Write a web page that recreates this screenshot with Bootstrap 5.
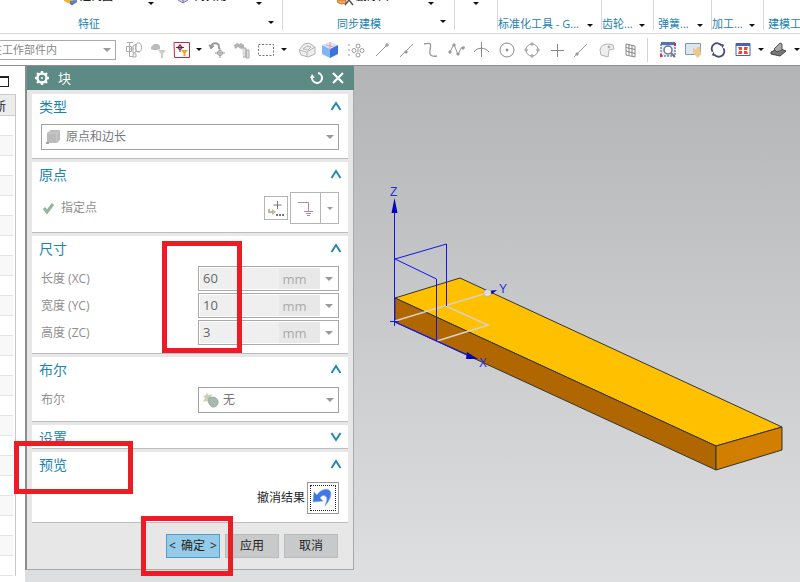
<!DOCTYPE html>
<html lang="zh-CN">
<head>
<meta charset="utf-8">
<meta name="viewport" content="width=device-width, initial-scale=1">
<title>块</title>
<link href="https://cdn.jsdelivr.net/npm/bootstrap@5.3.0/dist/css/bootstrap.min.css" rel="stylesheet">
<style>
body{font-family:"Open Sans","Noto Sans CJK SC",sans-serif;font-size:12px;line-height:16px;color:#222;background:#fff}
button{font:inherit}
.plain{border:0;background:none;padding:0;color:inherit}
.tri{width:0;height:0;border:3px solid transparent;border-top-color:#111;border-bottom:0;flex:none;display:block}
.tri-lg{border-width:4px 4px 0;border-top-color:#999}
.tri-dim{border-top-color:#999}
/* ribbon */
.ribbon{height:34px;border-bottom:1px solid #d8d8d8;font-size:11px;overflow:hidden}
.rgroup{flex:none;border-right:1px solid #d8d8d8;height:30px}
.rtop{height:12px;overflow:hidden}
.rtop button{height:12px;line-height:12px;display:flex;align-items:flex-end}
.rtop svg{flex:none}
.rtop .cap{display:block;height:16px;line-height:16px;margin-bottom:8px;font-weight:500;width:38px;text-align:left;white-space:nowrap}
.rtop .tri{margin-bottom:7px}
.rlabel{height:20px;color:#1d7fae;white-space:nowrap;padding-top:4px}
.g1{width:283px}.g2{width:172px}.g3{width:43px}.g4{width:104px}.g5{width:52px}.g6{width:58px}.g7{width:52px}
.in1{padding-left:64px}.in2{padding-left:54px}
.gap-24{width:24px}.gap-30{width:30px}.gap-34{width:34px}
/* selection bar */
.tools{height:32px;border-bottom:1px solid #8f8f8f;overflow:hidden}
.scope{width:126px;height:20px;margin:0 6px 0 -10px;flex:none}
.scope select{font-size:11px;color:#888;border:1px solid #a9a9a9;padding:0}
.pick{appearance:none;border-radius:0;background:#fff;outline:0;width:100%;height:100%;line-height:16px}
.over-tri{position:absolute;right:5px;top:50%;margin-top:-2px;pointer-events:none}
.t24{width:24px}.t25{width:25px}.t26{width:26px}.t12{width:12px}.t10{width:10px}
.tools button{flex:none;height:28px;display:flex;align-items:center;justify-content:center}
.vsep{width:1px;height:24px;background:#d4d4d4;flex:none;margin:0 7px 0 4px}
/* part navigator edge */
.nav-edge{width:25px;overflow:hidden;flex:none}
.winbox{width:16px;height:11px;border:2px solid #222;border-width:2px 1px 1px;margin:10px 0 7px -7px}
.tree{width:16px;border-right:1px solid #c8c8c8}
.tree .th0{height:22px;background:#ececec;border:solid #ccc;border-width:1px 0;overflow:hidden;direction:rtl;padding-right:9px;line-height:23px;white-space:nowrap}
.tree .tr0{height:20px;border-bottom:1px solid #e4e4e4;margin-right:2px}
.tree .tr0:nth-child(odd){background:#f8f8f8}
/* dialog */
.dlg{width:329px;flex:none;background:#e7e7e7;border:1px solid #a9a9a9;border-top:0;border-left:2px solid #8c8c8c}
.dlg-head{height:24px;background:#5d8a84;color:#fff;font-size:13px;margin-right:-1px;padding:0 10px 0 7px}
.secs{gap:3px;padding:4px 5px 0}
.sec{background:#fff;border-bottom:1px solid #bdbdbd}
.sec-head{height:23px;color:#1d84b2;padding:3px 6px 0 7px}
.sec-head h2{font-size:14px;line-height:20px;font-weight:400;margin:0}
.sec-body{padding:7px 9px 8px;color:#8e8e8e}
.rows{gap:2px}
.combo{height:26px}
.combo select{border:1px solid #a3a3a3;color:#777;padding:0 0 0 24px}
.combo svg{position:absolute;left:4px;top:4px;pointer-events:none}
.fld{width:141px}
.num{height:25px;border:1px solid #a9a9a9;padding:1px;background:#fff}
.num input{border:0;background:#efefef;color:#666;font-size:13px;line-height:16px;padding:0 0 2px 3px;width:79px;min-width:0;outline:0;border-radius:0}
.num .unit{width:41px;background:#e8e8e8;color:#aaa;font-size:13px;line-height:23px;text-align:center;padding-right:10px}
.num button{flex:1}
.ptbtn{width:24px;height:24px;border:1px solid #b5b5b5;background:#fff}
.split{width:49px;height:32px;border:1px solid #b5b5b5;margin-left:2px}
.split .drop{width:18px;border-left:1px solid #b5b5b5}
.undo-label{margin-right:2px}
.undo{width:32px;height:32px;border:1px solid #999;background:#fff;padding:2px}
.undo span{border:1px dotted #222}
.foot{padding:11px 15px;gap:5px}
.foot button{width:54px;height:24px;border:1px solid #bbb;background:#c8c9cb;color:#222;padding:0;white-space:nowrap}
.foot .ok{background:#95cbe8;border-color:#4b9fc8;display:flex;align-items:center;justify-content:center;gap:5px}
/* graphics window */
.work{background:linear-gradient(#b3b4b6,#c9cacc 50%,#dddfe1);min-width:0}
.scene{min-width:0;height:516px}
.scene svg{width:100%;height:100%;display:block}
/* callouts */
.hl{position:absolute;border:5px solid #ed1c24;pointer-events:none}
.hl-size{left:162px;top:175px;width:80px;height:112px}
.hl-preview{left:14px;top:375px;width:119px;height:53px}
.hl-ok{left:141px;top:450px;width:92px;height:60px}
</style>
<script src="https://cdn.jsdelivr.net/npm/bootstrap@5.3.0/dist/js/bootstrap.bundle.min.js"></script>
</head>
<body class="d-flex flex-column min-vh-100 overflow-hidden">

<header class="ribbon d-flex">
  <div class="rgroup g1">
    <div class="rtop d-flex in1">
      <button class="plain"><svg width="16" height="12"><path d="M0 0h13v2l-5 3-8-4z" fill="#f0b040"/><path d="M6 1l7-1v2L8 5.500 6 4z" fill="#5c7fc4"/></svg><span class="cap">边倒圆</span></button>
      <span class="gap-30"></span>
      <button class="plain" aria-label="更多"><span class="tri"></span></button>
      <span class="gap-24"></span>
      <button class="plain"><svg width="16" height="12"><path d="M0 0l5 3 5-3" fill="#c8d4f4" stroke="#6f85d0"/><path d="M5 0v3" stroke="#e04040"/></svg><span class="cap">倒斜角</span></button>
      <span class="gap-24"></span>
      <button class="plain" aria-label="更多"><span class="tri"></span></button>
    </div>
    <div class="rlabel position-relative text-center pe-2"><span class="d-inline-block me-5 pe-5">特征</span><span class="tri position-absolute end-0 bottom-0 mb-2 me-2"></span></div>
  </div>
  <div class="rgroup g2">
    <div class="rtop d-flex in2">
      <button class="plain"><svg width="19" height="12"><path d="M0 0h9v3L4 4 0 2z" fill="#f2a35c" stroke="#c87830"/><path d="M8 5l4-5 4 5" fill="none" stroke="#555" stroke-width="1.500"/></svg><span class="cap">删除面</span></button>
      <span class="gap-34"></span>
      <button class="plain" aria-label="更多"><span class="tri"></span></button>
    </div>
    <div class="rlabel d-flex in2"><span>同步建模</span><span class="tri ms-auto mt-1 me-2"></span></div>
  </div>
  <div class="rgroup g3"><div class="rtop d-flex justify-content-center"><button class="plain" aria-label="更多"><span class="tri"></span></button></div></div>
  <div class="rgroup g4"><div class="rtop"></div><div class="rlabel d-flex justify-content-between pe-2"><span>标准化工具 - G...</span><span class="tri mt-2"></span></div></div>
  <div class="rgroup g5"><div class="rtop"></div><div class="rlabel d-flex justify-content-between pe-2"><span>齿轮...</span><span class="tri mt-2"></span></div></div>
  <div class="rgroup g6"><div class="rtop"></div><div class="rlabel d-flex justify-content-between ps-1 pe-2"><span>弹簧...</span><span class="tri mt-2"></span></div></div>
  <div class="rgroup g7"><div class="rtop"></div><div class="rlabel d-flex justify-content-between pe-2"><span>加工...</span><span class="tri mt-2"></span></div></div>
  <div class="rgroup border-0"><div class="rtop"></div><div class="rlabel ps-1">建模工具</div></div>
</header>

<div class="tools d-flex align-items-center" role="toolbar" aria-label="选择条">
  <div class="scope position-relative"><select class="pick" aria-label="选择范围"><option>在工作部件内</option></select><span class="tri tri-lg over-tri"></span></div>
  <button class="plain t24" aria-label="部件间链接"><svg width="18" height="18" fill="none" stroke="#aaa"><path d="M2 1.500h6M4.500 1v14.500h4M4.500 8h4M1.500 5.500h5v5h-5zM8 5l3-2v8l-3 1zM8 13h3v3H8z"/><ellipse cx="13.500" cy="6.500" rx="3" ry="4.500"/><path d="M11 10l4 1"/></svg></button>
  <button class="plain t24" aria-label="过滤"><svg width="18" height="18"><path d="M2 6l3-3h4l2 2v3l-3 1H4L2 8z" fill="#bbb"/><path d="M9 9h8l-3 4v4h-2v-4z" fill="#ccc"/></svg></button>
  <button class="plain t24" aria-label="选择过滤器"><svg width="18" height="18"><path d="M1 1.500h15.500v15H1.500z" fill="#fff" stroke="#c22743"/><g fill="none" stroke="#7a1d33"><circle cx="7" cy="6.500" r="2"/><path d="M3 6.500h8M7 3v8"/></g><path d="M8 9h7l-2.500 3v3h-2v-3z" fill="#f2a41c"/></svg></button>
  <button class="plain t10" aria-label="展开"><span class="tri"></span></button>
  <button class="plain t26" aria-label="重置"><svg width="18" height="18" fill="none" stroke="#999"><path d="M3 6c0-5 8-5 8 0v2" stroke-width="1.800"/><path d="M1 4l2 4 3-3z" fill="#999"/><circle cx="12" cy="12" r="2.500"/><path d="M7 12h10M12 7v10"/></svg></button>
  <button class="plain t24" aria-label="移动"><svg width="18" height="18"><path d="M1 4l3-2 2 1 2-1 3 2v3l-3 1-3-2-3 2z" fill="#b4b4b4"/><path d="M9 7h4v9h-3M13 9h3v8h-3z" fill="#ddd" stroke="#aaa"/></svg></button>
  <button class="plain t24" aria-label="矩形选择"><svg width="18" height="18"><path d="M1.500 3.500h15v11h-15z" fill="none" stroke="#777" stroke-dasharray="2 1.500"/></svg></button>
  <button class="plain t12 me-1" aria-label="展开"><span class="tri"></span></button>
  <button class="plain t25" aria-label="线框实体"><svg width="18" height="18" fill="#ececec" stroke="#b4b4b4"><path d="M1 9l5-6 5-1 6 4v7l-7 3-7-2zM1 9l8 2 8-5M9 11v5M5 8l4-3 4 1-3 3z"/></svg></button>
  <button class="plain t25 pe-1" aria-label="着色"><svg width="18" height="18"><path d="M1 4l8-3 8 3-8 4z" fill="#d4e6ff"/><path d="M1 4l8 4v9l-8-4z" fill="#7fb6f6"/><path d="M17 4L9 8v9l8-4z" fill="#3c72dc"/><path d="M9 1v8M5 4l8 2" stroke="#e99" fill="none"/></svg></button>
  <button class="plain t25" aria-label="捕捉点"><svg width="18" height="18" fill="none" stroke="#999"><circle cx="10" cy="5" r="2"/><circle cx="6" cy="9.500" r="2"/><circle cx="14" cy="9.500" r="2"/><circle cx="10" cy="14" r="2"/><path d="M1 3v2M1 8v2M1 13v2M10 8v3"/></svg></button>
  <button class="plain t25" aria-label="端点"><svg width="18" height="18" fill="none" stroke="#999"><path d="M3 15L14 4"/><path d="M13 3h2v2h-2z" fill="#999"/></svg></button>
  <button class="plain t25" aria-label="中点"><svg width="18" height="18" fill="none" stroke="#999"><path d="M2 16L15 3"/><path d="M7 10h2v2H7z" fill="#999"/></svg></button>
  <button class="plain t25" aria-label="控制点"><svg width="18" height="18" fill="none" stroke="#999" stroke-width="1.300"><path d="M1 3c8-2 7 1 6 6s1 7 7 6"/></svg></button>
  <button class="plain t25" aria-label="极点"><svg width="18" height="18" fill="none" stroke="#999"><path d="M2 11l4-8 4 11 3-7 4-1"/><path d="M1 10h2v2H1zM5 3h2v2H5zM9 12h2v2H9zM14 6h2v2h-2z" fill="#999"/></svg></button>
  <button class="plain t25" aria-label="交点"><svg width="18" height="18" fill="none" stroke="#888"><path d="M8.500 1v15M1 11c3-5 11-5 15 0"/></svg></button>
  <button class="plain t25" aria-label="圆心"><svg width="18" height="18" fill="none" stroke="#888"><circle cx="9" cy="9" r="7"/><circle cx="9" cy="9" r="1" fill="#888"/></svg></button>
  <button class="plain t25" aria-label="象限点"><svg width="18" height="18" fill="none" stroke="#999"><circle cx="9" cy="9" r="6"/><path d="M8 2h2v2H8zM8 14h2v2H8zM2 8h2v2H2zM14 8h2v2h-2z" fill="#fff"/></svg></button>
  <button class="plain t25" aria-label="现有点"><svg width="18" height="18" stroke="#888"><path d="M9.500 3v13M3 9.500h13"/></svg></button>
  <button class="plain t25" aria-label="点在曲线上"><svg width="18" height="18" fill="none" stroke="#999"><path d="M1 16L14 3"/><path d="M3 12h2v2H3z" fill="#999"/></svg></button>
  <button class="plain t25" aria-label="点在面上"><svg width="18" height="18" fill="#eee" stroke="#b4b4b4"><path d="M2 9c1-6 8-7 13-5l1 4-5 1-1 7-7-2z"/><circle cx="11" cy="6" r="1" fill="#888"/></svg></button>
  <button class="plain t24" aria-label="栅格点"><svg width="18" height="18" fill="none" stroke="#888"><path d="M4 3l9 2v11l-9-2zM7 3v11M10 4v11M4 6.500l9 2M4 10l9 2.500"/></svg></button>
  <span class="vsep"></span>
  <button class="plain t25" aria-label="适合窗口"><svg width="18" height="18"><path d="M2 2h14v13H2z" fill="#e6edf8" stroke="#3343b4" stroke-dasharray="2 1"/><path d="M2 1h14v3H2z" fill="#536fc0"/><circle cx="9" cy="9" r="4" fill="#fff" stroke="#777" stroke-width="1.500"/><path d="M12 12l4 4" stroke="#777" stroke-width="2"/><path d="M15 2h2v3h-2zM1 13h2v3H1z" fill="#d33"/></svg></button>
  <button class="plain t25" aria-label="平移"><svg width="18" height="18"><path d="M1.500 2.500h15v11h-15z" fill="#dbe7f0" stroke="#8098b0"/><path d="M9 6l3 3 1-3h3l1 7-3 4-5-5z" fill="#ecc88d"/></svg></button>
  <button class="plain t25" aria-label="旋转"><svg width="16" height="16" viewBox="0 0 18 18" fill="none" stroke="#424c83" stroke-width="2"><path d="M3 11A6 6 0 0 1 13 4M15 7A6 6 0 0 1 5 14"/><path d="M12 2l4 1-2 4zM6 16l-4-1 2-4z" fill="#424c83" stroke="none"/></svg></button>
  <button class="plain t25" aria-label="布局"><svg width="18" height="18"><path d="M2 2.500h14v12H2z" fill="#fff" stroke="#4862b0"/><path d="M2 2h14v3H2z" fill="#4862b0"/><path d="M4 6h4v3H5v-1zM14 6h-4v3h3zM4 13h4v-3H5zM14 13h-4v-3h3z" fill="#e84a32"/></svg></button>
  <button class="plain t12" aria-label="展开"><span class="tri"></span></button>
  <button class="plain t24" aria-label="渲染"><svg width="18" height="18"><path d="M1 11l8-4 7 3-6 5-9-2z" fill="#777" stroke="#444"/><path d="M4 8l6-6 2 1v6l-5 2z" fill="#a8a8a8" stroke="#555"/></svg></button>
  <button class="plain t12" aria-label="展开"><span class="tri"></span></button>
</div>

<main class="d-flex flex-grow-1 position-relative">
  <aside class="nav-edge">
    <div class="winbox"></div>
    <div class="tree">
      <div class="th0">最新</div>
      <div class="tr0"></div><div class="tr0"></div><div class="tr0"></div><div class="tr0"></div><div class="tr0"></div><div class="tr0"></div><div class="tr0"></div><div class="tr0"></div><div class="tr0"></div><div class="tr0"></div><div class="tr0"></div><div class="tr0"></div><div class="tr0"></div><div class="tr0"></div><div class="tr0"></div><div class="tr0"></div><div class="tr0"></div><div class="tr0"></div><div class="tr0"></div><div class="tr0"></div><div class="tr0"></div><div class="tr0"></div><div class="tr0"></div>
    </div>
  </aside>

  <div class="work d-flex flex-grow-1 align-items-start">
    <form class="dlg" onsubmit="return false">
      <div class="dlg-head d-flex align-items-center">
        <svg width="16" height="16" viewBox="0 0 16 16"><circle cx="8" cy="8" r="4.500" fill="none" stroke="#fff" stroke-width="2.400"/><path d="M8 1v2.500M8 12.500V15M1 8h2.500M12.500 8H15M3 3l2 2M11 11l2 2M13 3l-2 2M5 11l-2 2" stroke="#fff" stroke-width="2.400"/><circle cx="8" cy="8" r="1" fill="#fff"/></svg>
        <span class="ms-2">块</span>
        <button type="button" class="plain ms-auto me-2 d-flex" aria-label="重置"><svg width="14" height="14" fill="none" stroke="#fff" stroke-width="2"><path d="M8 2a5 5 0 1 1-6 5"/><path d="M0 7h5L2 3z" fill="#fff" stroke="none"/></svg></button>
        <button type="button" class="plain d-flex" aria-label="关闭"><svg width="12" height="12" stroke="#fff" stroke-width="2.200"><path d="M1 1l10 10M11 1L1 11"/></svg></button>
      </div>
      <div class="secs d-grid">
        <section class="sec">
          <div class="sec-head d-flex justify-content-between align-items-center"><h2>类型</h2><button type="button" class="plain d-flex" aria-label="折叠"><svg width="12" height="12" fill="none" stroke="#2587b8" stroke-width="2"><path d="M1.500 9L6 2l4.500 7"/></svg></button></div>
          <div class="sec-body"><div class="combo position-relative">
            <select class="pick" aria-label="类型"><option>原点和边长</option></select>
            <svg width="18" height="18"><path d="M2 5l4-3h9v10l-3 3H2z" fill="#bbb"/><path d="M2 5h10v10M12 5l3-3" stroke="#ccc" fill="none"/><path d="M1 14h3v2H1z" fill="#b99"/></svg>
            <span class="tri tri-lg over-tri"></span></div></div>
        </section>
        <section class="sec">
          <div class="sec-head d-flex justify-content-between align-items-center"><h2>原点</h2><button type="button" class="plain d-flex" aria-label="折叠"><svg width="12" height="12" fill="none" stroke="#2587b8" stroke-width="2"><path d="M1.500 9L6 2l4.500 7"/></svg></button></div>
          <div class="sec-body d-flex align-items-center">
            <svg width="16" height="14"><path d="M3 7l3 4 6-8" fill="none" stroke="#94b59c" stroke-width="3"/></svg>
            <span class="ms-1">指定点</span>
            <button type="button" class="plain ptbtn ms-auto d-flex justify-content-center align-items-center" aria-label="点对话框"><svg width="20" height="20" fill="none" stroke="#777"><path d="M11.500 3v8M7.500 7h8"/><path d="M3 11v3h4" stroke="#c4b49a" stroke-width="2"/><path d="M6 11l4 3-4 3z" fill="#c4b49a" stroke="none"/><path d="M10 17h8" stroke-width="2" stroke-dasharray="2 1"/></svg></button>
            <div class="split d-flex">
              <button type="button" class="plain flex-grow-1 d-flex align-items-center justify-content-center" aria-label="自动判断的点"><svg width="26" height="26" fill="none" stroke="#a68aa6"><path d="M5 7.500h10.500v9M11 16.500h9M13 18.500h5M14 20.500h3"/></svg></button>
              <button type="button" class="plain drop d-flex align-items-center justify-content-center" aria-label="展开"><span class="tri tri-dim"></span></button>
            </div>
          </div>
        </section>
        <section class="sec">
          <div class="sec-head d-flex justify-content-between align-items-center"><h2>尺寸</h2><button type="button" class="plain d-flex" aria-label="折叠"><svg width="12" height="12" fill="none" stroke="#2587b8" stroke-width="2"><path d="M1.500 9L6 2l4.500 7"/></svg></button></div>
          <div class="sec-body rows d-grid">
            <div class="d-flex align-items-center justify-content-between"><label for="xc">长度 (XC)</label><div class="num fld d-flex"><input id="xc" value="60"><span class="unit">mm</span><button type="button" class="plain d-flex align-items-center justify-content-center" aria-label="展开"><span class="tri tri-lg"></span></button></div></div>
            <div class="d-flex align-items-center justify-content-between"><label for="yc">宽度 (YC)</label><div class="num fld d-flex"><input id="yc" value="10"><span class="unit">mm</span><button type="button" class="plain d-flex align-items-center justify-content-center" aria-label="展开"><span class="tri tri-lg"></span></button></div></div>
            <div class="d-flex align-items-center justify-content-between"><label for="zc">高度 (ZC)</label><div class="num fld d-flex"><input id="zc" value="3"><span class="unit">mm</span><button type="button" class="plain d-flex align-items-center justify-content-center" aria-label="展开"><span class="tri tri-lg"></span></button></div></div>
          </div>
        </section>
        <section class="sec">
          <div class="sec-head d-flex justify-content-between align-items-center"><h2>布尔</h2><button type="button" class="plain d-flex" aria-label="折叠"><svg width="12" height="12" fill="none" stroke="#2587b8" stroke-width="2"><path d="M1.500 9L6 2l4.500 7"/></svg></button></div>
          <div class="sec-body d-flex align-items-center justify-content-between">
            <label for="bool">布尔</label>
            <div class="combo fld position-relative"><select class="pick" id="bool"><option>无</option></select>
            <svg width="18" height="18"><path d="M5 1l1 3 4-1-1 3 3 2-4 1-1 4-2-3-4 1 2-4-2-2 3-1z" fill="#d2cdb4"/><path d="M7 7c4-2 9 0 9 4s-3 5-5 5-5-3-4-9z" fill="#a9bab2" stroke="#8fa399"/></svg>
            <span class="tri tri-lg over-tri"></span></div>
          </div>
        </section>
        <section class="sec">
          <div class="sec-head d-flex justify-content-between align-items-center"><h2>设置</h2><button type="button" class="plain d-flex" aria-label="展开"><svg width="12" height="12" fill="none" stroke="#2587b8" stroke-width="2"><path d="M1.500 1L6 8l4.500-7"/></svg></button></div>
        </section>
        <section class="sec">
          <div class="sec-head d-flex justify-content-between align-items-center"><h2>预览</h2><button type="button" class="plain d-flex" aria-label="折叠"><svg width="12" height="12" fill="none" stroke="#2587b8" stroke-width="2"><path d="M1.500 9L6 2l4.500 7"/></svg></button></div>
          <div class="sec-body d-flex align-items-center justify-content-end text-dark">
            <label for="undo" class="undo-label">撤消结果</label>
            <button type="button" id="undo" class="undo d-flex"><span class="flex-grow-1 align-self-stretch d-flex align-items-center justify-content-center"><svg width="22" height="22" viewBox="0 0 22 22"><path d="M2 5l3 3c3-5 9-7 12-5 4 3 1 10-4 16 2-6 3-9 0-10-2-1-4 0-5 2l3 3-10 1z" fill="#3f78e4" stroke="#7aa5f0" stroke-width=".6"/></svg></span></button>
          </div>
        </section>
      </div>
      <div class="foot d-flex justify-content-end">
        <button class="ok"><span>&lt;</span><span>确定</span><span>&gt;</span></button><button type="button">应用</button><button type="button">取消</button>
      </div>
    </form>

    <div class="scene flex-grow-1">
      <svg viewBox="354 66 446 516" preserveAspectRatio="xMinYMin slice" role="img" aria-label="块模型">
        <g stroke="#333" stroke-width="1" stroke-linejoin="round">
          <path d="M395 298L460 278L782 427L716 446Z" fill="#ffc000"/>
          <path d="M395 298L716 446V470L395 322Z" fill="#b16700"/>
          <path d="M716 446L782 427V450L716 470Z" fill="#d27e00"/>
        </g>
        <path d="M395 321L487 293M446 306L488 325L437 341" fill="none" stroke="#d8cfc8" stroke-width="1.500"/>
        <g fill="none" stroke="#1414f0" stroke-width="1">
          <path d="M394.500 212V326M390 321.500H399M395 259L446.500 244V306M395 259L436.500 279V341"/>
          <path d="M395 322L470 356" stroke-width="1.300"/>
        </g>
        <path d="M394.500 198l3 15h-6zM467 352l11 7-12 0zM487 291l10-1-5 4z" fill="#0505b8"/>
        <path d="M484 291l4-2 3 2v4l-4 2-3-2z" fill="#ddd" stroke="#999" stroke-width=".5"/>
        <g fill="#1f2fe8" font-family="Liberation Sans,sans-serif" font-size="12">
          <text x="390" y="196">Z</text><text x="499" y="293">Y</text><text x="479" y="367">X</text>
        </g>
      </svg>
    </div>
  </div>
  <div class="hl hl-size"></div><div class="hl hl-preview"></div><div class="hl hl-ok"></div>
</main>
</body>
</html>
